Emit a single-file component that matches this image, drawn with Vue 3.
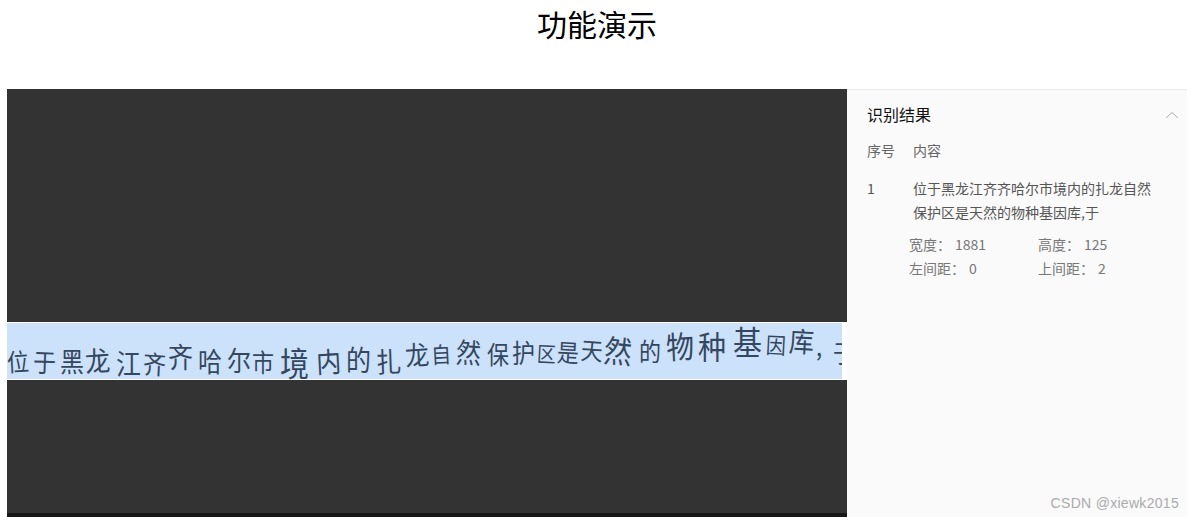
<script setup>
// [char, left edge, font size, vertical shift, rotation]
const strokes = [
  ['位', 6, 22, 9, -3], ['于', 32, 23, 10, 2], ['黑', 59, 24, 10, 0], ['龙', 84, 25, 8, -4],
  ['江', 115, 25, 12, 0], ['齐', 142, 23, 12, 3], ['齐', 167, 25, 5, 0], ['哈', 197, 24, 10, 0],
  ['尔', 226, 24, 9, 0], ['市', 251, 22, 10, 0], ['境', 279, 29, 10, 0], ['内', 315, 25, 9, -3],
  ['的', 345, 25, 8, 0], ['扎', 375, 25, 9, -2], ['龙', 404, 24, 3, -4], ['自', 430, 20, 3, -3],
  ['然', 455, 25, 0, 3], ['保', 486, 22, 2, 0], ['护', 511, 23, 1, 0], ['区', 536, 19, 1, 3],
  ['是', 556, 22, 0, 3], ['天', 580, 22, -2, 4], ['然', 603, 28, -1, 5], ['的', 638, 22, -1, 0],
  ['物', 665, 28, -6, -3], ['种', 697, 28, -5, 0], ['基', 732, 29, -11, 0], ['因', 765, 20, -6, 3],
  ['库', 788, 25, -11, 3], [',', 815, 22, -6, 0], ['于', 832, 22, 1, 0],
]

const chars = strokes.map(([text, left, size, shift, turn], i) => {
  const next = strokes[i + 1] ? strokes[i + 1][1] : 842
  return {
    text,
    style: {
      width: `${next - left}px`,
      fontSize: `${size}px`,
      transform: `translateY(${shift}px) rotate(${turn}deg) scaleY(1.12)`,
    },
  }
})

const details = [
  [{ label: '宽度：', value: '1881' }, { label: '高度：', value: '125' }],
  [{ label: '左间距：', value: '0' }, { label: '上间距：', value: '2' }],
]
</script>

<template>
  <div class="page">
    <h1 class="title">功能演示</h1>
    <div class="demo">
      <div class="canvas">
        <div class="strip">
          <div class="photo">
            <span v-for="(c, i) in chars" :key="i" class="char" :style="c.style">{{ c.text }}</span>
          </div>
        </div>
        <div class="toolbar"></div>
      </div>
      <aside class="result">
        <div class="result-head">
          <span>识别结果</span>
          <svg class="chevron" width="14" height="8" viewBox="0 0 14 8">
            <polyline points="1,7 7,1.5 13,7" fill="none" stroke="#aaa" stroke-width="1" />
          </svg>
        </div>
        <div class="row head-row">
          <span class="index">序号</span>
          <span>内容</span>
        </div>
        <div class="row text-row">
          <span class="index">1</span>
          <span class="content">位于黑龙江齐齐哈尔市境内的扎龙自然保护区是天然的物种基因库,于</span>
        </div>
        <div class="details">
          <template v-for="(line, i) in details" :key="i">
            <div v-for="item in line" :key="item.label" class="detail">
              <span>{{ item.label }}</span>
              <span>{{ item.value }}</span>
            </div>
          </template>
        </div>
      </aside>
    </div>
    <div class="mark">CSDN @xiewk2015</div>
  </div>
</template>

<style scoped>
.page {
  position: relative;
  height: 517px;
  overflow: hidden;
  background: #fff;
  font-family: "Noto Sans CJK SC", "Liberation Sans", sans-serif;
  color: #666;
}

.title {
  margin: 0;
  height: 89px;
  padding-top: 2px;
  box-sizing: border-box;
  text-align: center;
  font-size: 30px;
  line-height: 42px;
  font-weight: 400;
  color: #000;
}

.demo {
  display: flex;
  margin: 0 7px;
}

.canvas {
  position: relative;
  display: flex;
  flex-direction: column;
  justify-content: center;
  width: 840px;
  height: 524px;
  background: #333;
}

.strip {
  height: 58px;
  box-sizing: border-box;
  padding: 1px 5px 1px 0;
  background: #fff;
}

.photo {
  display: flex;
  align-items: center;
  height: 56px;
  overflow-x: clip;
  background: #cce1fa;
}

.char {
  flex: none;
  display: block;
  line-height: 1;
  font-weight: 400;
  color: #34475f;
  white-space: nowrap;
}

.toolbar {
  position: absolute;
  left: 0;
  right: 0;
  bottom: 0;
  height: 100px;
  background: rgba(0, 0, 0, 0.55);
}

.result {
  width: 340px;
  height: 524px;
  box-sizing: border-box;
  padding: 0 8px 0 20px;
  border-top: 1px solid #e8e8e8;
  background: #fafafa;
  font-size: 14px;
  line-height: 24px;
}

.result-head {
  display: flex;
  justify-content: space-between;
  align-items: center;
  height: 47px;
  font-size: 16px;
  color: #111;
}

.row {
  display: flex;
}

.index {
  flex: none;
  width: 46px;
}

.head-row {
  height: 24px;
  margin-top: 1px;
}

.text-row {
  margin-top: 14px;
  color: #555;
}

.content {
  width: 240px;
}

.details {
  display: grid;
  grid-template-columns: 129px 1fr;
  margin: 8px 0 0 42px;
  color: #777;
}

.detail {
  display: flex;
  gap: 4px;
}

.chevron {
  margin-top: 3px;
}

.mark {
  position: absolute;
  right: 15px;
  bottom: 6px;
  font-family: "Liberation Sans", sans-serif;
  font-size: 14px;
  letter-spacing: 0.3px;
  color: #aaa;
}
</style>

<style>
html,
body {
  margin: 0;
  overflow: hidden;
}
</style>
